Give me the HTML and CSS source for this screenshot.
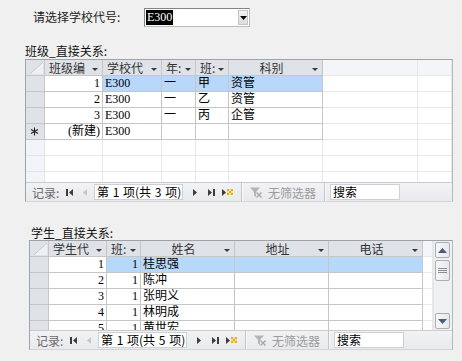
FILE: index.html
```html
<!DOCTYPE html>
<html>
<head>
<meta charset="utf-8">
<link rel="stylesheet" href="styles.css">
</head>
<body>
<div class="top">
  <span class="prompt">请选择学校代号:</span>
  <div class="combo">
    <span class="combo-val"><span class="hl">E300</span></span>
    <span class="combo-btn"><svg width="7" height="4" viewBox="0 0 7 4"><polygon points="0,0 7,0 3.5,4" fill="#000"/></svg></span>
  </div>
</div>

<div class="caption cap1">班级_直接关系:</div>
<div class="grid g1">
  <div class="rows">
    <div class="row">
      <div class="c hs"><svg width="18" height="15" viewBox="0 0 18 15"><polygon points="4,14 17,2 17,14" fill="#eef0f3"/><line x1="4" y1="14" x2="17" y2="2" stroke="#c4c9d0"/></svg></div>
      <div class="c hd"><span class="lbl">班级编</span><svg class="dd" width="6" height="3" viewBox="0 0 6 3"><polygon points="0,0 6,0 3,3" fill="#3a3a3a"/></svg></div>
      <div class="c hd"><span class="lbl">学校代</span><svg class="dd" width="6" height="3" viewBox="0 0 6 3"><polygon points="0,0 6,0 3,3" fill="#3a3a3a"/></svg></div>
      <div class="c hd"><span class="lbl">年:</span><svg class="dd" width="6" height="3" viewBox="0 0 6 3"><polygon points="0,0 6,0 3,3" fill="#3a3a3a"/></svg></div>
      <div class="c hd"><span class="lbl">班:</span><svg class="dd" width="6" height="3" viewBox="0 0 6 3"><polygon points="0,0 6,0 3,3" fill="#3a3a3a"/></svg></div>
      <div class="c hd"><span class="lbl ctr">科别</span><svg class="dd" width="6" height="3" viewBox="0 0 6 3"><polygon points="0,0 6,0 3,3" fill="#3a3a3a"/></svg></div>
      <div class="c hx"></div>
      <div class="c hx"></div>
    </div>
    <div class="row">
      <div class="c s"></div><div class="c r">1</div><div class="c bl">E300</div><div class="c bl">一</div><div class="c bl">甲</div><div class="c bl">资管</div><div class="c x"></div><div class="c x"></div>
    </div>
    <div class="row">
      <div class="c s"></div><div class="c r">2</div><div class="c">E300</div><div class="c">一</div><div class="c">乙</div><div class="c">资管</div><div class="c x"></div><div class="c x"></div>
    </div>
    <div class="row">
      <div class="c s"></div><div class="c r">3</div><div class="c">E300</div><div class="c">一</div><div class="c">丙</div><div class="c">企管</div><div class="c x"></div><div class="c x"></div>
    </div>
    <div class="row">
      <div class="c s star"><svg width="9" height="9" viewBox="0 0 9 9"><path d="M4.5 0.5v8M1 2.5l7 4M8 2.5l-7 4" stroke="#222" stroke-width="1.1"/></svg></div><div class="c r">(新建)</div><div class="c">E300</div><div class="c"></div><div class="c"></div><div class="c"></div><div class="c x"></div><div class="c x"></div>
    </div>
    <div class="row">
      <div class="c sx"></div><div class="c x"></div><div class="c x"></div><div class="c x"></div><div class="c x"></div><div class="c x"></div><div class="c x"></div><div class="c x"></div>
    </div>
    <div class="row">
      <div class="c sx"></div><div class="c x"></div><div class="c x"></div><div class="c x"></div><div class="c x"></div><div class="c x"></div><div class="c x"></div><div class="c x"></div>
    </div>
    <div class="row">
      <div class="c sx"></div><div class="c x"></div><div class="c x"></div><div class="c x"></div><div class="c x"></div><div class="c x"></div><div class="c x"></div><div class="c x"></div>
    </div>
  </div>
  <div class="nav">
    <span class="rec">记录:</span>
    <span class="ico first"><svg width="7" height="9" viewBox="0 0 7 9"><rect x="0" y="1" width="2" height="7" fill="#3c3c3c"/><polygon points="7,1 3,4.5 7,8" fill="#3c3c3c"/></svg></span>
    <span class="ico prev"><svg width="4" height="9" viewBox="0 0 4 9"><polygon points="4,1 0,4.5 4,8" fill="#c6c6c6"/></svg></span>
    <span class="tb">第 1 项(共 3 项)</span>
    <span class="ico next"><svg width="4" height="9" viewBox="0 0 4 9"><polygon points="0,1 4,4.5 0,8" fill="#3c3c3c"/></svg></span>
    <span class="ico last"><svg width="7" height="9" viewBox="0 0 7 9"><polygon points="0,1 4,4.5 0,8" fill="#3c3c3c"/><rect x="5" y="1" width="2" height="7" fill="#3c3c3c"/></svg></span>
    <span class="ico new"><svg width="12" height="9" viewBox="0 0 12 9"><polygon points="0,1 4,4.5 0,8" fill="#3c3c3c"/><rect x="5" y="1" width="6" height="6" fill="#f6e08a"/><rect x="5" y="1" width="2" height="2" fill="#e0b020"/><rect x="9" y="1" width="2" height="2" fill="#e0b020"/><rect x="7" y="3" width="2" height="2" fill="#e0b020"/><rect x="5" y="5" width="2" height="2" fill="#e0b020"/><rect x="9" y="5" width="2" height="2" fill="#e0b020"/></svg></span>
    <span class="sep"></span>
    <span class="flt"><svg width="12" height="11" viewBox="0 0 12 11"><path d="M0 0.5h10l-4 4.5v5l-2-1.5v-3.5z" fill="#b4b4b4"/><path d="M6.5 5.5l5 5M11.5 5.5l-5 5" stroke="#a8a8a8" stroke-width="1.4"/></svg><span class="ft">无筛选器</span></span>
    <span class="sep"></span>
    <span class="sb">搜索</span>
  </div>
</div>

<div class="caption cap2">学生_直接关系:</div>
<div class="grid g2">
  <div class="rows">
    <div class="tbl">
      <div class="row">
        <div class="c hs"><svg width="18" height="15" viewBox="0 0 18 15"><polygon points="4,14 17,2 17,14" fill="#eef0f3"/><line x1="4" y1="14" x2="17" y2="2" stroke="#c4c9d0"/></svg></div>
        <div class="c hd"><span class="lbl">学生代</span><svg class="dd" width="6" height="3" viewBox="0 0 6 3"><polygon points="0,0 6,0 3,3" fill="#3a3a3a"/></svg></div>
        <div class="c hd"><span class="lbl">班:</span><svg class="dd" width="6" height="3" viewBox="0 0 6 3"><polygon points="0,0 6,0 3,3" fill="#3a3a3a"/></svg></div>
        <div class="c hd"><span class="lbl ctr">姓名</span><svg class="dd" width="6" height="3" viewBox="0 0 6 3"><polygon points="0,0 6,0 3,3" fill="#3a3a3a"/></svg></div>
        <div class="c hd"><span class="lbl ctr">地址</span><svg class="dd" width="6" height="3" viewBox="0 0 6 3"><polygon points="0,0 6,0 3,3" fill="#3a3a3a"/></svg></div>
        <div class="c hd"><span class="lbl ctr">电话</span><svg class="dd" width="6" height="3" viewBox="0 0 6 3"><polygon points="0,0 6,0 3,3" fill="#3a3a3a"/></svg></div>
        <div class="c hx"></div>
      </div>
      <div class="row">
        <div class="c s"></div><div class="c r">1</div><div class="c r bl">1</div><div class="c bl">桂思强</div><div class="c bl"></div><div class="c bl"></div><div class="c x"></div>
      </div>
      <div class="row">
        <div class="c s"></div><div class="c r">2</div><div class="c r">1</div><div class="c">陈冲</div><div class="c"></div><div class="c"></div><div class="c x"></div>
      </div>
      <div class="row">
        <div class="c s"></div><div class="c r">3</div><div class="c r">1</div><div class="c">张明义</div><div class="c"></div><div class="c"></div><div class="c x"></div>
      </div>
      <div class="row">
        <div class="c s"></div><div class="c r">4</div><div class="c r">1</div><div class="c">林明成</div><div class="c"></div><div class="c"></div><div class="c x"></div>
      </div>
      <div class="row">
        <div class="c s"></div><div class="c r">5</div><div class="c r">1</div><div class="c">黄世宏</div><div class="c"></div><div class="c"></div><div class="c x"></div>
      </div>
    </div>
    <div class="vs">
      <span class="sbtn"><svg width="9" height="5" viewBox="0 0 9 5"><polygon points="0,5 9,5 4.5,0" fill="#4a5a7a"/></svg></span>
      <span class="thumb"><svg width="9" height="6" viewBox="0 0 9 6"><path d="M0 0.5h9M0 2.5h9M0 4.5h9" stroke="#8a8f97"/></svg></span>
      <span class="sbtn down"><svg width="9" height="5" viewBox="0 0 9 5"><polygon points="0,0 9,0 4.5,5" fill="#4a5a7a"/></svg></span>
    </div>
  </div>
  <div class="nav">
    <span class="rec">记录:</span>
    <span class="ico first"><svg width="7" height="9" viewBox="0 0 7 9"><rect x="0" y="1" width="2" height="7" fill="#3c3c3c"/><polygon points="7,1 3,4.5 7,8" fill="#3c3c3c"/></svg></span>
    <span class="ico prev"><svg width="4" height="9" viewBox="0 0 4 9"><polygon points="4,1 0,4.5 4,8" fill="#c6c6c6"/></svg></span>
    <span class="tb">第 1 项(共 5 项)</span>
    <span class="ico next"><svg width="4" height="9" viewBox="0 0 4 9"><polygon points="0,1 4,4.5 0,8" fill="#3c3c3c"/></svg></span>
    <span class="ico last"><svg width="7" height="9" viewBox="0 0 7 9"><polygon points="0,1 4,4.5 0,8" fill="#3c3c3c"/><rect x="5" y="1" width="2" height="7" fill="#3c3c3c"/></svg></span>
    <span class="ico new"><svg width="12" height="9" viewBox="0 0 12 9"><polygon points="0,1 4,4.5 0,8" fill="#3c3c3c"/><rect x="5" y="1" width="6" height="6" fill="#f6e08a"/><rect x="5" y="1" width="2" height="2" fill="#e0b020"/><rect x="9" y="1" width="2" height="2" fill="#e0b020"/><rect x="7" y="3" width="2" height="2" fill="#e0b020"/><rect x="5" y="5" width="2" height="2" fill="#e0b020"/><rect x="9" y="5" width="2" height="2" fill="#e0b020"/></svg></span>
    <span class="sep"></span>
    <span class="flt"><svg width="12" height="11" viewBox="0 0 12 11"><path d="M0 0.5h10l-4 4.5v5l-2-1.5v-3.5z" fill="#b4b4b4"/><path d="M6.5 5.5l5 5M11.5 5.5l-5 5" stroke="#a8a8a8" stroke-width="1.4"/></svg><span class="ft">无筛选器</span></span>
    <span class="sep"></span>
    <span class="sb">搜索</span>
  </div>
</div>
</body>
</html>
```

FILE: styles.css
```css
* { box-sizing: border-box; }
body {
  margin: 0;
  width: 462px;
  height: 361px;
  overflow: hidden;
  background: #f0f0f0;
  font-family: "Noto Sans CJK SC", "Noto Sans", sans-serif;
  font-size: 12px;
  color: #000;
}
.top {
  display: flex;
  align-items: center;
  padding-top: 8px;
  height: 27px;
}
.prompt {
  width: 144px;
  padding-left: 33px;
  line-height: 17px;
  color: #222;
  margin-top: -2px;
}
.combo {
  display: flex;
  align-items: center;
  width: 106px;
  height: 19px;
  background: #fff;
  border: 1px solid #7f858c;
  border-right-color: #b8bcc2;
  border-bottom-color: #b8bcc2;
  padding: 1px;
}
.combo-val { flex: 1; display: flex; align-items: center; }
.hl {
  background: #000;
  color: #fff;
  font-family: "Liberation Serif", serif;
  font-size: 12px;
  line-height: 15px;
  padding: 0 1px;
}
.combo-btn {
  width: 10px;
  height: 15px;
  display: flex;
  align-items: center;
  justify-content: center;
  background: linear-gradient(#f2f2f2, #dcdcdc);
  border: 1px solid #c6c6c6;
}
.caption {
  height: 17px;
  line-height: 17px;
  color: #111;
}
.cap1 { margin-top: 15px; padding-left: 25px; }
.cap2 { margin-top: 24px; height: 14px; line-height: 14px; padding-left: 31px; }

.grid {
  background: #fff;
  border: 1px solid #9fa3a8;
  border-right-color: #b4b7bb;
  border-bottom-color: #d2d4d7;
}
.g1 { margin-left: 25px; width: 428px; height: 143px; }
.g2 { margin-left: 29px; width: 424px; height: 110px; }
.g1 .rows { height: 122px; overflow: hidden; }
.g2 .rows { height: 89px; overflow: hidden; display: flex; }
.g2 .tbl { width: 403px; }
.row { display: grid; height: 16px; }
.g1 .row { grid-template-columns: 19px 58px 59px 34px 33px 94px 95px 34px; }
.g2 .row { grid-template-columns: 19px 58px 34px 94px 94px 94px 10px; }

.c {
  border-right: 1px solid #c6c6c6;
  border-bottom: 1px solid #c6c6c6;
  line-height: 15px;
  height: 16px;
  white-space: nowrap;
  overflow: hidden;
  padding: 0 2px;
  font-family: "Liberation Serif", "Noto Sans CJK SC", serif;
  font-size: 12px;
}
.r { text-align: right; padding-right: 2px; }
.s { background: #dfe3e8; }
.star { display: flex; align-items: center; padding-left: 4px; }
.sx { background: #f2f4f9; border-color: #e2e5ea; }
.x { border-color: #e8e8e8; }
.bl { background: #b8d8fb; }
.hs { background: #dfe3e8; padding: 0; }
.hs svg { display: block; }
.hd {
  background: #dfe3e8;
  display: flex;
  align-items: center;
  padding: 0 4px;
  font-family: "Noto Sans CJK SC", sans-serif;
  color: #333;
}
.lbl { flex: 1; white-space: nowrap; line-height: 15px; }
.ctr { text-align: center; }
.dd { flex: none; margin-left: 2px; margin-top: 3px; }
.hx { background: #f4f5f9; border-color: #e6e8ec; }

.vs {
  width: 19px;
  background: #eef0f2;
  border-left: 1px solid #e6e6e6;
  display: flex;
  flex-direction: column;
  padding: 1px;
}
.sbtn, .thumb {
  height: 16px;
  width: 15px;
  border: 1px solid #a9afb7;
  border-radius: 2px;
  background: linear-gradient(90deg, #f7f7f8, #e6e8eb);
  display: flex;
  align-items: center;
  justify-content: center;
}
.thumb { height: 21px; margin-top: 2px; }
.down { margin-top: auto; }

.nav {
  height: 19px;
  border-top: 1px solid #c9cbce;
  background: linear-gradient(#f1f2f4, #e8eaed);
  display: flex;
  align-items: center;
  font-size: 12px;
}
.rec { width: 36px; padding-left: 6px; color: #6a6a6a; }
.ico { display: flex; align-items: center; }
.first { margin-left: 4px; }
.prev { margin-left: 10px; }
.tb {
  margin-left: 7px;
  width: 89px;
  height: 16px;
  background: #fff;
  border: 1px solid #cdd1d6;
  font-size: 12px;
  word-spacing: 1px;
  line-height: 14px;
  padding-left: 2px;
  white-space: nowrap;
}
.next { margin-left: 10px; }
.last { margin-left: 11px; }
.new { margin-left: 7px; }
.sep {
  width: 2px;
  height: 18px;
  border-left: 1px solid #c2c4c8;
  border-right: 1px solid #fafafa;
  margin-left: 7px;
}
.flt { display: flex; align-items: center; width: 81px; padding-left: 7px; color: #9c9c9c; }
.ft { margin-left: 6px; }
.flt + .sep { margin-left: 0; }
.sb {
  margin-left: 4px;
  width: 70px;
  height: 16px;
  background: #fff;
  border: 1px solid #cdd1d6;
  font-size: 12px;
  line-height: 14px;
  padding-left: 2px;
}
```
